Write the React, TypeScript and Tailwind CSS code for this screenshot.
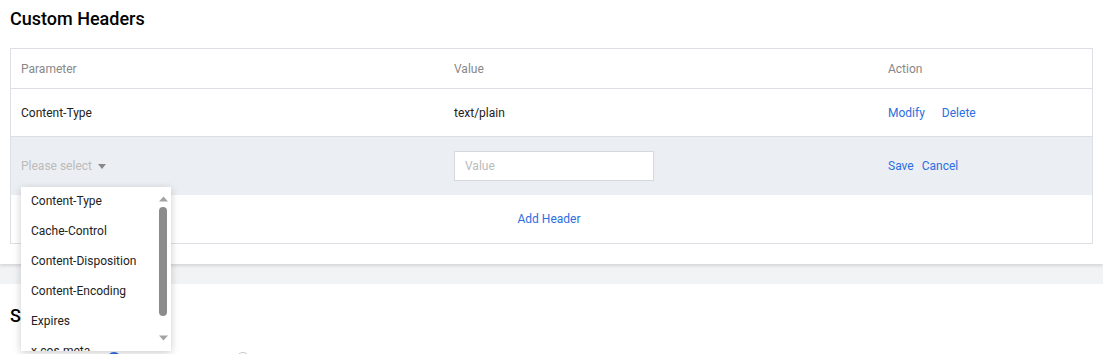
import React from 'react';

const headerOptions = [
  'Content-Type',
  'Cache-Control',
  'Content-Disposition',
  'Content-Encoding',
  'Expires',
  'x-cos-meta-',
];

function SelectDropdown() {
  return (
    <div className="absolute left-0 top-[50px] z-20 w-[150px] h-[164px] overflow-hidden bg-white shadow-[0_2px_8px_rgba(0,0,0,0.2)]">
      <ul className="pr-[14px]">
        {headerOptions.map((opt) => (
          <li key={opt} className="h-[30px] leading-[28px] pl-[10px] text-[12px] text-[#222] whitespace-nowrap">
            {opt}
          </li>
        ))}
      </ul>
      {/* scrollbar */}
      <div className="absolute right-[3px] top-0 h-full w-[10px] flex flex-col items-center">
        <svg width="9" height="6" viewBox="0 0 9 6" className="mt-[9px]">
          <path d="M0 5.5 L4.5 0.5 L9 5.5 Z" fill="#a3a3a3" />
        </svg>
        <div className="mt-[5px] w-[8px] h-[109px] rounded-[4px] bg-[#8c8c8c]" />
        <svg width="9" height="6" viewBox="0 0 9 6" className="mt-[19px]">
          <path d="M0 0.5 L4.5 5.5 L9 0.5 Z" fill="#a3a3a3" />
        </svg>
      </div>
    </div>
  );
}

export default function App() {
  return (
    <div className="relative w-[1103px] h-[354px] overflow-hidden bg-white font-['Roboto','Liberation_Sans',sans-serif] text-[12px] text-[#222]">
      <section className="relative z-10 bg-white px-[10px] pb-[20px] shadow-[0_2px_3px_rgba(0,0,0,0.12)]">
        <h2 className="h-[48px] pt-[7px] text-[18px] leading-[24px] font-medium text-black">Custom Headers</h2>

        <div className="border border-[#dcdfe4]">
          <div className="grid grid-cols-[433px_434px_1fr] h-[40px] items-center border-b border-[#dcdfe4] text-[#888]">
            <div className="px-[10px]">Parameter</div>
            <div className="px-[10px]">Value</div>
            <div className="px-[10px]">Action</div>
          </div>

          <div className="grid grid-cols-[433px_434px_1fr] h-[48px] items-center border-b border-[#dcdfe4]">
            <div className="px-[10px]">Content-Type</div>
            <div className="px-[10px]">text/plain</div>
            <div className="px-[10px] flex text-[#2d6ee0]">
              <a className="mr-[17px] cursor-pointer">Modify</a>
              <a className="cursor-pointer">Delete</a>
            </div>
          </div>

          <div className="grid grid-cols-[433px_434px_1fr] h-[58px] items-center bg-[#ebeef2]">
            <div className="px-[10px] relative h-full flex items-center">
              <div className="flex items-center gap-[6px] text-[#bbb] cursor-pointer">
                <span>Please select</span>
                <svg width="8" height="5" viewBox="0 0 8 5">
                  <path d="M0 0 L8 0 L4 5 Z" fill="#888" />
                </svg>
              </div>
              <div className="absolute left-[10px] top-0 w-[150px]">
                <SelectDropdown />
              </div>
            </div>
            <div className="px-[10px]">
              <input
                className="w-[200px] h-[30px] border border-[#d5d8dd] bg-white px-[10px] text-[12px] outline-none placeholder:text-[#bbb]"
                placeholder="Value"
              />
            </div>
            <div className="px-[10px] flex text-[#2d6ee0]">
              <a className="mr-[8px] cursor-pointer">Save</a>
              <a className="cursor-pointer">Cancel</a>
            </div>
          </div>

          <div className="h-[48px] flex items-center justify-center text-[#2d6ee0]">
            <a className="cursor-pointer mr-[5px]">Add Header</a>
          </div>
        </div>
      </section>

      <div className="h-[20px] bg-[#f2f3f5]" />

      <section className="bg-white px-[10px]">
        <h2 className="pt-[20px] text-[18px] leading-[24px] font-medium text-black">Sets</h2>
        <div className="mt-[24px] flex items-start">
          <span className="w-[97px]" />
          <span className="w-[14px] h-[14px] rounded-full border-[4px] border-[#2d6ee0] bg-white" />
          <span className="ml-[115px] w-[14px] h-[14px] rounded-full border border-[#c4c8ce] bg-white" />
        </div>
      </section>
    </div>
  );
}
